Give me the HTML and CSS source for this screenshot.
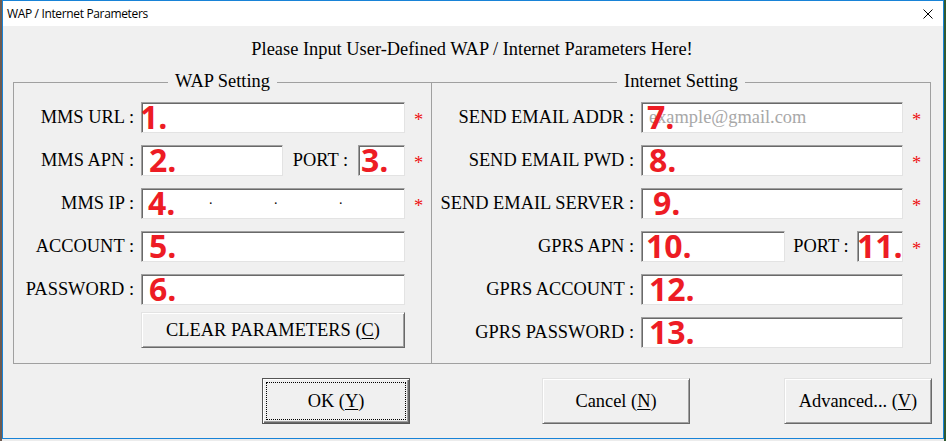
FILE: index.html
```html
<!DOCTYPE html>
<html>
<head>
<meta charset="utf-8">
<title>WAP / Internet Parameters</title>
<link rel="stylesheet" href="styles.css">
</head>
<body>
<div class="window">
  <div class="titlebar">
    <span class="title">WAP / Internet Parameters</span>
    <span class="close"><svg width="10" height="10" viewBox="0 0 10 10"><path d="M0.5 0.5 L9.5 9.5 M9.5 0.5 L0.5 9.5" stroke="#000" stroke-width="1" fill="none"/></svg></span>
  </div>
  <div class="client">
    <p class="intro">Please Input User-Defined WAP / Internet Parameters Here!</p>
    <div class="groups">
      <fieldset class="group group-wap">
        <legend>WAP Setting</legend>
        <div class="form form-wap">
          <span class="lbl">MMS URL :</span>
          <div class="field"><div class="edit"><span class="mark mark-1">1.</span></div></div>
          <span class="req">*</span>

          <span class="lbl">MMS APN :</span>
          <div class="field">
            <div class="edit apn"><span class="mark">2.</span></div>
            <span class="port-lbl">PORT :</span>
            <div class="edit port"><span class="mark mark-3">3.</span></div>
          </div>
          <span class="req">*</span>

          <span class="lbl">MMS IP :</span>
          <div class="field">
            <div class="edit ip">
              <span class="seg"></span><span class="dot">.</span><span class="seg"></span><span class="dot">.</span><span class="seg"></span><span class="dot">.</span><span class="seg"></span>
              <span class="mark mark-4">4.</span>
            </div>
          </div>
          <span class="req">*</span>

          <span class="lbl">ACCOUNT :</span>
          <div class="field"><div class="edit"><span class="mark">5.</span></div></div>

          <span class="lbl">PASSWORD :</span>
          <div class="field"><div class="edit"><span class="mark">6.</span></div></div>

          <div class="field field-btn"><button type="button" class="btn btn-clear">CLEAR PARAMETERS (<u>C</u>)</button></div>
        </div>
      </fieldset>
      <fieldset class="group group-net">
        <legend>Internet Setting</legend>
        <div class="form form-net">
          <span class="lbl">SEND EMAIL ADDR :</span>
          <div class="field"><div class="edit"><span class="hint">example@gmail.com</span><span class="mark mark-7">7.</span></div></div>
          <span class="req">*</span>

          <span class="lbl">SEND EMAIL PWD :</span>
          <div class="field"><div class="edit"><span class="mark">8.</span></div></div>
          <span class="req">*</span>

          <span class="lbl">SEND EMAIL SERVER :</span>
          <div class="field"><div class="edit"><span class="mark mark-9">9.</span></div></div>
          <span class="req">*</span>

          <span class="lbl">GPRS APN :</span>
          <div class="field">
            <div class="edit apn"><span class="mark mark-10">10.</span></div>
            <span class="port-lbl">PORT :</span>
            <div class="edit port"><span class="mark mark-11">11.</span></div>
          </div>
          <span class="req">*</span>

          <span class="lbl">GPRS ACCOUNT :</span>
          <div class="field"><div class="edit"><span class="mark mark-12">12.</span></div></div>

          <span class="lbl">GPRS PASSWORD :</span>
          <div class="field"><div class="edit"><span class="mark mark-12">13.</span></div></div>
        </div>
      </fieldset>
    </div>
    <div class="actions">
      <button type="button" class="btn btn-default btn-ok"><span class="focus">OK (<u>Y</u>)</span></button>
      <button type="button" class="btn btn-cancel">Cancel (<u>N</u>)</button>
      <button type="button" class="btn">Advanced... (<u>V</u>)</button>
    </div>
  </div>
</div>
</body>
</html>
```

FILE: styles.css
```css
html, body {
  margin: 0;
  padding: 0;
}

body {
  width: 946px;
  height: 441px;
  overflow: hidden;
  background: linear-gradient(90deg, #6d5b52 0 2px, #ececec 2px calc(100% - 2px), #2f5a32 calc(100% - 2px));
  font-family: "Liberation Serif", "Times New Roman", serif;
  color: #000;
}

.window {
  box-sizing: border-box;
  margin-left: 2px;
  width: 942px;
  height: 439px;
  border: 1px solid #1883d7;
  background: #f0f0f0;
  display: flex;
  flex-direction: column;
}

.titlebar {
  height: 25px;
  background: #fff;
  display: flex;
  align-items: center;
  flex: none;
}

.title {
  flex: 1;
  padding-left: 4px;
  font-family: "Open Sans", "Noto Sans", sans-serif;
  font-size: 12px;
  letter-spacing: -0.35px;
  color: #000;
}

.close {
  width: 30px;
  height: 25px;
  display: flex;
  align-items: center;
  justify-content: center;
}

.close svg {
  display: block;
}

.client {
  padding: 0 12px 0 10px;
  font-size: 18.4px;
}

.intro {
  margin: 0 0 11px;
  padding-top: 12px;
  line-height: 22px;
  text-align: center;
}

.groups {
  display: flex;
}

.group {
  box-sizing: border-box;
  margin: 0;
  padding: 9px 0 15px;
  border: 1px solid #a0a0a0;
  min-width: 0;
}

.group-wap {
  width: 419px;
}

.group-net {
  width: 500px;
  margin-left: -1px;
}

.group legend {
  margin: 0 auto;
  padding: 1px 7px 3px;
  line-height: 18px;
  font-size: 18.4px;
}

.form {
  display: grid;
  grid-template-rows: repeat(6, 31px);
  column-gap: 7px;
  row-gap: 12px;
}

.form-wap {
  grid-template-columns: 120px 264px 1fr;
}

.form-net {
  grid-template-columns: 202px 262px 1fr;
}

.lbl {
  grid-column: 1;
  text-align: right;
  line-height: 31px;
  white-space: nowrap;
}

.field {
  grid-column: 2;
  display: flex;
}

.req {
  grid-column: 3;
  color: #ee1111;
  line-height: 31px;
  padding-left: 2px;
  padding-top: 3px;
}

.edit {
  position: relative;
  flex: 1;
  box-sizing: border-box;
  height: 31px;
  background: #fff;
  border: 1px solid;
  border-color: #a0a0a0 #e3e3e3 #e3e3e3 #a0a0a0;
  box-shadow: inset 1px 1px #696969;
  line-height: 29px;
  padding-left: 7px;
}

.edit.apn {
  flex: none;
  width: 142px;
}

.form-net .edit.apn {
  width: 144px;
}

.edit.port {
  flex: none;
  width: 47px;
}

.form-net .edit.port {
  width: 46px;
}

.port-lbl {
  flex: 1;
  text-align: center;
  line-height: 31px;
  white-space: nowrap;
}

.edit.ip {
  display: flex;
  padding-left: 4px;
}

.ip .seg {
  flex: 1;
}

.ip .dot {
  flex: none;
  width: 2px;
  font-size: 14px;
  line-height: 14px;
  padding-top: 4px;
  overflow: visible;
}

.hint {
  color: #a8a8a8;
}

.mark {
  position: absolute;
  left: 7px;
  top: -2px;
  font-family: "Open Sans", "Noto Sans", sans-serif;
  font-weight: 700;
  font-size: 32px;
  line-height: 31px;
  color: #ed1c24;
  white-space: nowrap;
}

.mark-1 { left: -2px; }
.mark-3 { left: 2px; }
.mark-4 { left: 6px; }
.mark-7 { left: 5px; }
.mark-9 { left: 11px; }
.mark-10 { left: 4px; }
.mark-11 { left: -1px; }
.mark-12 { left: 7px; }

.field-btn {
  align-items: flex-end;
}

.btn {
  box-sizing: border-box;
  margin: 0;
  padding: 0;
  font: inherit;
  font-size: 18.4px;
  color: #000;
  background: #f0f0f0;
  border: 1px solid;
  border-color: #e3e3e3 #696969 #696969 #e3e3e3;
  box-shadow: inset 1px 1px #fff, inset -1px -1px #a0a0a0;
  display: flex;
  align-items: center;
  justify-content: center;
  width: 148px;
  height: 46px;
  border-radius: 0;
}

.btn-clear {
  width: 100%;
  height: 36px;
  margin-top: -5px;
}

.btn u {
  text-underline-offset: 2px;
}

.btn-default {
  border: 1px solid #555;
  box-shadow: inset 1px 1px #fff, inset -1px -1px #696969, inset -2px -2px #a0a0a0;
  align-items: stretch;
  padding: 3px;
}

.focus {
  flex: 1;
  border: 1px dotted #000;
  display: flex;
  align-items: center;
  justify-content: center;
}

.actions {
  display: flex;
  justify-content: flex-end;
  margin-top: 14px;
  margin-right: -1px;
}

.btn-ok {
  margin-right: 132px;
}

.btn-cancel {
  margin-right: 94px;
}
```
